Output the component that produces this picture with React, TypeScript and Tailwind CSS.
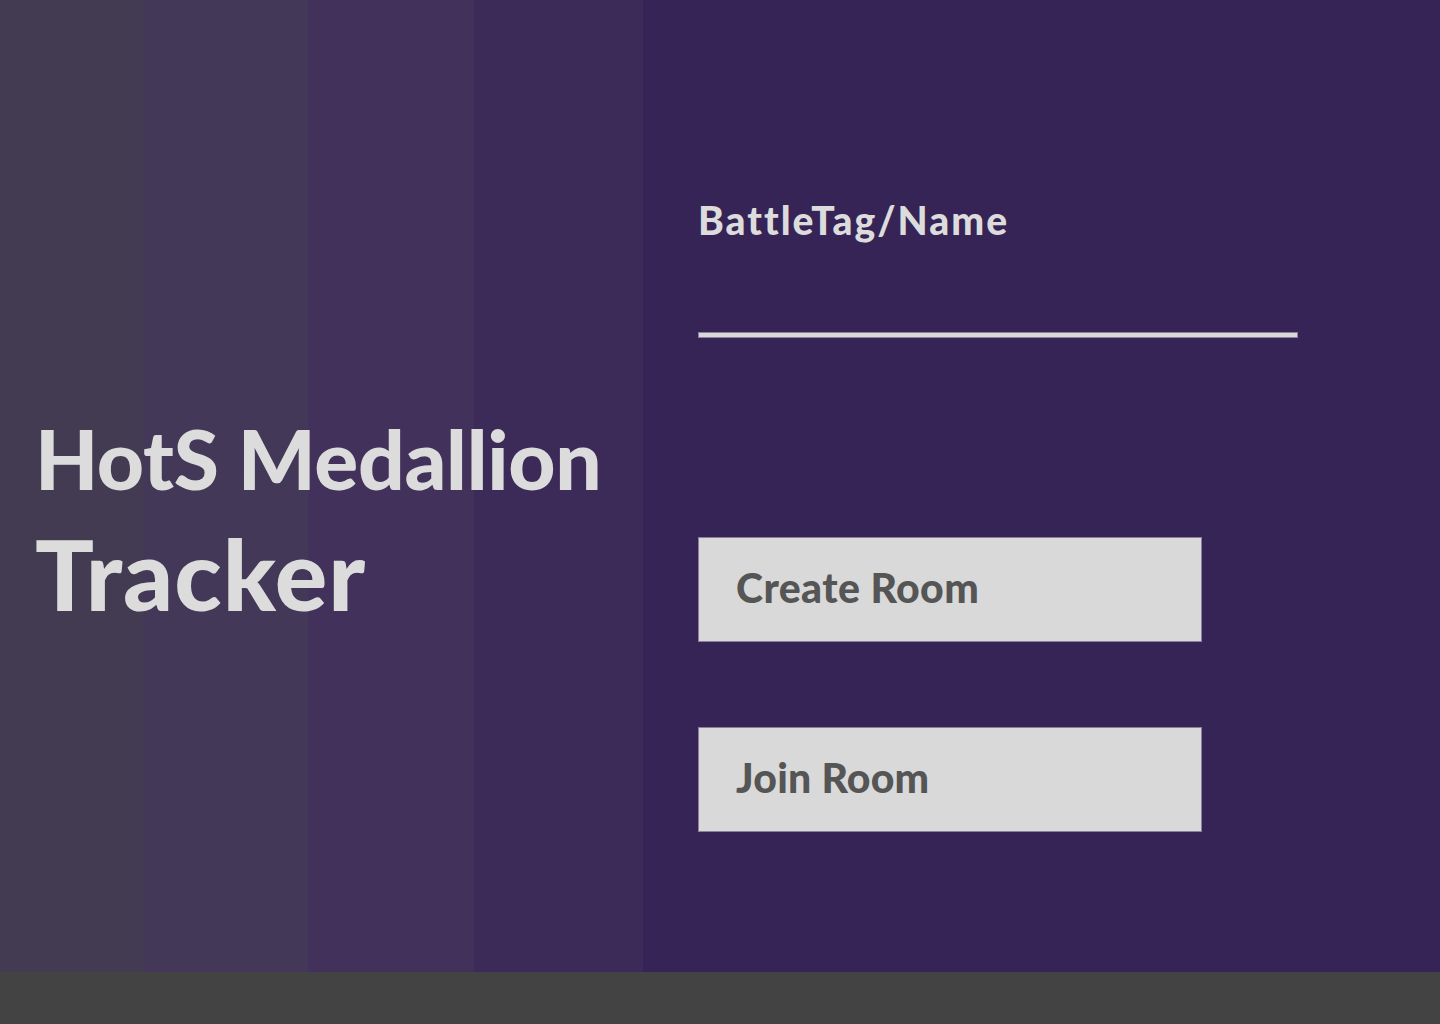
import React from "react";

export default function App() {
  return (
    <div className="w-[1440px] h-[1024px] flex flex-col" style={{ fontFamily: '"Lato", "Noto Sans", sans-serif' }}>
      <div className="flex h-[972px]">
        <div className="w-[643px] h-full bg-[linear-gradient(90deg,#433b51_0px,#433b51_143px,#433857_143px,#433857_308px,#42315a_308px,#42315a_474px,#3c2a58_474px,#3c2a58_643px)] pl-[35px] pt-[408px]">
          <div className="text-[#dcdcdc] font-black text-[82px] leading-[100px] tracking-[-0.3px]">HotS Medallion</div>
          <div className="text-[#dcdcdc] font-black text-[98px] leading-[120px] tracking-[1px] mt-[5px]">Tracker</div>
        </div>
        <div className="flex-1 h-full bg-[#372457] pl-[55px] pt-[196px]">
          <div className="text-[#dcdcdc] font-black text-[39px] leading-[48px] tracking-[2px]">BattleTag/Name</div>
          <div className="mt-[88px] w-[600px] h-[6px] bg-[#d9d9d9] border border-[#8a8099]"></div>
          <button className="block mt-[199px] w-[504px] h-[105px] bg-[#d9d9d9] border border-[#8a8099] text-left pl-[37px] pb-[4px] text-[#555555] font-black text-[41px] tracking-[0.4px]">Create Room</button>
          <button className="block mt-[85px] w-[504px] h-[105px] bg-[#d9d9d9] border border-[#8a8099] text-left pl-[37px] pb-[4px] text-[#555555] font-black text-[41px] tracking-[0.2px]">Join Room</button>
        </div>
      </div>
      <div className="flex-1 bg-[#434343]"></div>
    </div>
  );
}
